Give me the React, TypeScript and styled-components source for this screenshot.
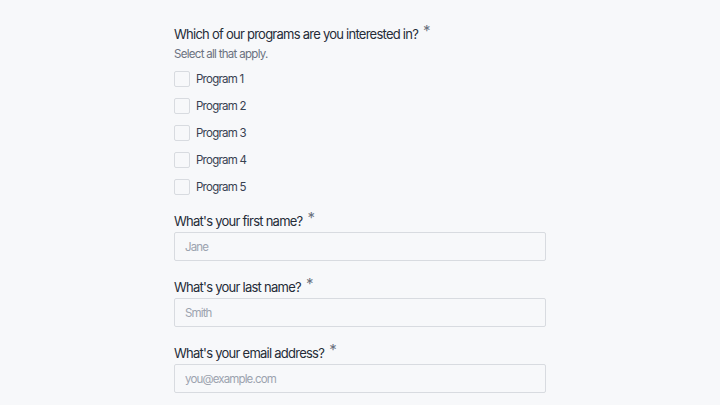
import React from 'react';
import styled, { createGlobalStyle } from 'styled-components';

const GlobalStyle = createGlobalStyle`
  html, body {
    margin: 0;
    padding: 0;
    background: #f7f8fa;
    font-family: Inter, "Noto Sans", sans-serif;
  }
`;

const Form = styled.form`
  width: 372px;
  margin: 0 auto;
  padding-top: 24px;
`;

const Section = styled.div`
  margin-bottom: 16px;
`;

const Label = styled.div`
  font-size: 13px;
  line-height: 20px;
  font-weight: 400;
  color: #252c38;
  letter-spacing: -0.75px;
`;

const Required = styled.span`
  color: #6b7280;
  font-size: 15px;
  margin-left: 5px;
  position: relative;
  top: -3px;
`;

const Hint = styled.div`
  font-size: 11.5px;
  line-height: 16px;
  color: #6b7280;
  letter-spacing: -0.7px;
  margin-top: 2px;
  margin-bottom: 9px;
`;

const OptionList = styled.div`
  display: flex;
  flex-direction: column;
  gap: 11px;
`;

const Option = styled.label`
  display: flex;
  align-items: center;
  gap: 6px;
  font-size: 11.5px;
  letter-spacing: -0.75px;
  color: #374151;
  height: 16px;
`;

const Box = styled.span`
  width: 14px;
  height: 14px;
  border: 1px solid #d8dbe0;
  border-radius: 2px;
  background: #f7f8fa;
`;

const Field = styled.div`
  margin-bottom: 16px;
`;

const Input = styled.input`
  display: block;
  box-sizing: border-box;
  width: 100%;
  height: 29px;
  margin-top: 1px;
  padding: 0 10px;
  border: 1px solid #d8dbe0;
  border-radius: 2px;
  background: #f7f8fa;
  font-family: inherit;
  font-size: 11.5px;
  letter-spacing: -0.85px;
  color: #374151;
  outline: none;

  &::placeholder {
    color: #9ca3af;
  }
`;

const programs = ['Program 1', 'Program 2', 'Program 3', 'Program 4', 'Program 5'];

const fields = [
  { label: "What's your first name?", placeholder: 'Jane' },
  { label: "What's your last name?", placeholder: 'Smith' },
  { label: "What's your email address?", placeholder: 'you@example.com' },
];

const App: React.FC = () => {
  return (
    <>
      <GlobalStyle />
      <Form onSubmit={e => e.preventDefault()}>
        <Section>
          <Label>
            Which of our programs are you interested in?<Required>*</Required>
          </Label>
          <Hint>Select all that apply.</Hint>
          <OptionList>
            {programs.map(p => (
              <Option key={p}>
                <Box />
                {p}
              </Option>
            ))}
          </OptionList>
        </Section>
        {fields.map(f => (
          <Field key={f.label}>
            <Label>
              {f.label}<Required>*</Required>
            </Label>
            <Input placeholder={f.placeholder} />
          </Field>
        ))}
      </Form>
    </>
  );
};

export default App;
